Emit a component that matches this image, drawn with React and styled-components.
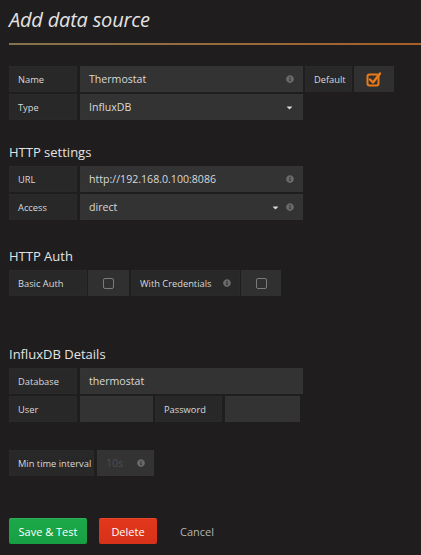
import React from 'react';
import styled, { createGlobalStyle } from 'styled-components';
import { FaInfoCircle, FaCaretDown } from 'react-icons/fa';

const Global = createGlobalStyle`
  html, body { margin: 0; padding: 0; background: #1f1d1d; }
  body { font-family: "Open Sans", "Noto Sans", sans-serif; color: #d8d9da; }
  * { box-sizing: border-box; }
`;

const Page = styled.div`
  width: 421px;
  height: 555px;
  padding: 8px 0 0 9px;
  background: #1f1d1d;
  overflow: hidden;
`;

const Title = styled.h1`
  margin: 0;
  font-size: 20px;
  line-height: 24px;
  font-weight: 400;
  font-style: italic;
  color: #e3e3e3;
  letter-spacing: -0.2px;
`;

const Rule = styled.div`
  height: 2px;
  margin-top: 11px;
  background: linear-gradient(to right, #8f7c52 0%, #a7723d 60%, #b5662a 100%);
  opacity: 0.9;
`;

const Section = styled.div`
  margin-top: ${p => p.$top}px;
  display: flex;
  flex-direction: column;
  gap: 2px;
`;

const Heading = styled.h3`
  margin: 0 0 4px 0;
  font-size: 13px;
  line-height: 16px;
  font-weight: 400;
  color: #e3e3e3;
`;

const Row = styled.div`
  display: flex;
  gap: 2px;
  height: 26px;
`;

const Label = styled.div`
  width: ${p => p.$w}px;
  flex: none;
  display: flex;
  align-items: center;
  padding-left: 8px;
  font-size: 9.3px;
  white-space: nowrap;
  color: #d8d9da;
  background: #282828;
  border: 1px solid #2a2a2a;
  margin-right: ${p => p.$gap || 0}px;
`;

const Field = styled.div`
  width: ${p => p.$w}px;
  flex: none;
  display: flex;
  align-items: center;
  padding: 0 8px;
  font-size: 10.6px;
  white-space: nowrap;
  color: ${p => (p.$dim ? '#4d4d4d' : '#d8d9da')};
  background: #333333;
  border: 1px solid #343434;
  gap: 6px;
`;

const Value = styled.span`
  flex: 1;
  white-space: nowrap;
`;

const Info = styled(FaInfoCircle)`
  width: 8px;
  height: 8px;
  color: #6a6a6a;
  flex: none;
`;

const Caret = styled(FaCaretDown)`
  width: 9px;
  height: 9px;
  color: #d8d9da;
  flex: none;
`;

const CheckCell = styled.div`
  width: ${p => p.$w}px;
  flex: none;
  display: flex;
  align-items: center;
  justify-content: center;
  background: #303030;
`;

const EmptyBox = styled.span`
  width: 11px;
  height: 11px;
  border: 1px solid #7b7b7b;
  border-radius: 2px;
`;

const Buttons = styled.div`
  margin-top: 42px;
  display: flex;
  align-items: center;
  gap: 12px;
`;

const Button = styled.button`
  width: ${p => p.$w}px;
  height: 26px;
  border: none;
  border-radius: 2px;
  font-family: inherit;
  font-size: 11px;
  color: #fff;
  background: ${p => p.$bg};
  box-shadow: inset 0 1px 0 rgba(255, 255, 255, 0.08);
  padding: 0;
`;

const Cancel = styled.span`
  margin-left: 11px;
  font-size: 11px;
  color: #b5b5b5;
`;

function CheckedBox() {
  return (
    <svg width="16" height="16" viewBox="0 0 16 16">
      <rect x="1.5" y="3.5" width="11" height="11" rx="2" fill="none" stroke="#eb7b18" strokeWidth="2" />
      <path d="M4 8.5 L7 11.5 L14 2.5" fill="none" stroke="#eb7b18" strokeWidth="2.4" strokeLinecap="round" strokeLinejoin="round" />
    </svg>
  );
}

export default function App() {
  return (
    <Page>
      <Global />
      <Title>Add data source</Title>
      <Rule />

      <Section $top={21}>
        <Row>
          <Label $w={68} $gap={1}>Name</Label>
          <Field $w={223}>
            <Value>Thermostat</Value>
            <Info />
          </Field>
          <Label $w={47}>Default</Label>
          <CheckCell $w={40}>
            <CheckedBox />
          </CheckCell>
        </Row>
        <Row>
          <Label $w={68} $gap={1}>Type</Label>
          <Field $w={223}>
            <Value>InfluxDB</Value>
            <Caret />
          </Field>
        </Row>
      </Section>

      <Section $top={24}>
        <Heading>HTTP settings</Heading>
        <Row>
          <Label $w={68} $gap={1}>URL</Label>
          <Field $w={223}>
            <Value>http://192.168.0.100:8086</Value>
            <Info />
          </Field>
        </Row>
        <Row>
          <Label $w={68} $gap={1}>Access</Label>
          <Field $w={223}>
            <Value>direct</Value>
            <Caret />
            <Info />
          </Field>
        </Row>
      </Section>

      <Section $top={28}>
        <Heading>HTTP Auth</Heading>
        <Row>
          <Label $w={78} $gap={-1}>Basic Auth</Label>
          <CheckCell $w={41}>
            <EmptyBox />
          </CheckCell>
          <Label $w={109} $gap={-1}>
            <Value>With Credentials</Value>
            <Info style={{ marginRight: 8 }} />
          </Label>
          <CheckCell $w={40}>
            <EmptyBox />
          </CheckCell>
        </Row>
      </Section>

      <Section $top={50}>
        <Heading>InfluxDB Details</Heading>
        <Row>
          <Label $w={68} $gap={1}>Database</Label>
          <Field $w={223}>
            <Value>thermostat</Value>
          </Field>
        </Row>
        <Row>
          <Label $w={68} $gap={1}>User</Label>
          <Field $w={73} />
          <Label $w={67} $gap={1}>Password</Label>
          <Field $w={75} />
        </Row>
      </Section>

      <Section $top={28}>
        <Row>
          <Label $w={85} $gap={1}>Min time interval</Label>
          <Field $w={57} $dim>
            <Value>10s</Value>
            <Info />
          </Field>
        </Row>
      </Section>

      <Buttons>
        <Button $w={78} $bg="linear-gradient(to bottom, #1ca84a, #17a043)">Save &amp; Test</Button>
        <Button $w={58} $bg="linear-gradient(to bottom, #e2371c, #d63219)">Delete</Button>
        <Cancel>Cancel</Cancel>
      </Buttons>
    </Page>
  );
}
